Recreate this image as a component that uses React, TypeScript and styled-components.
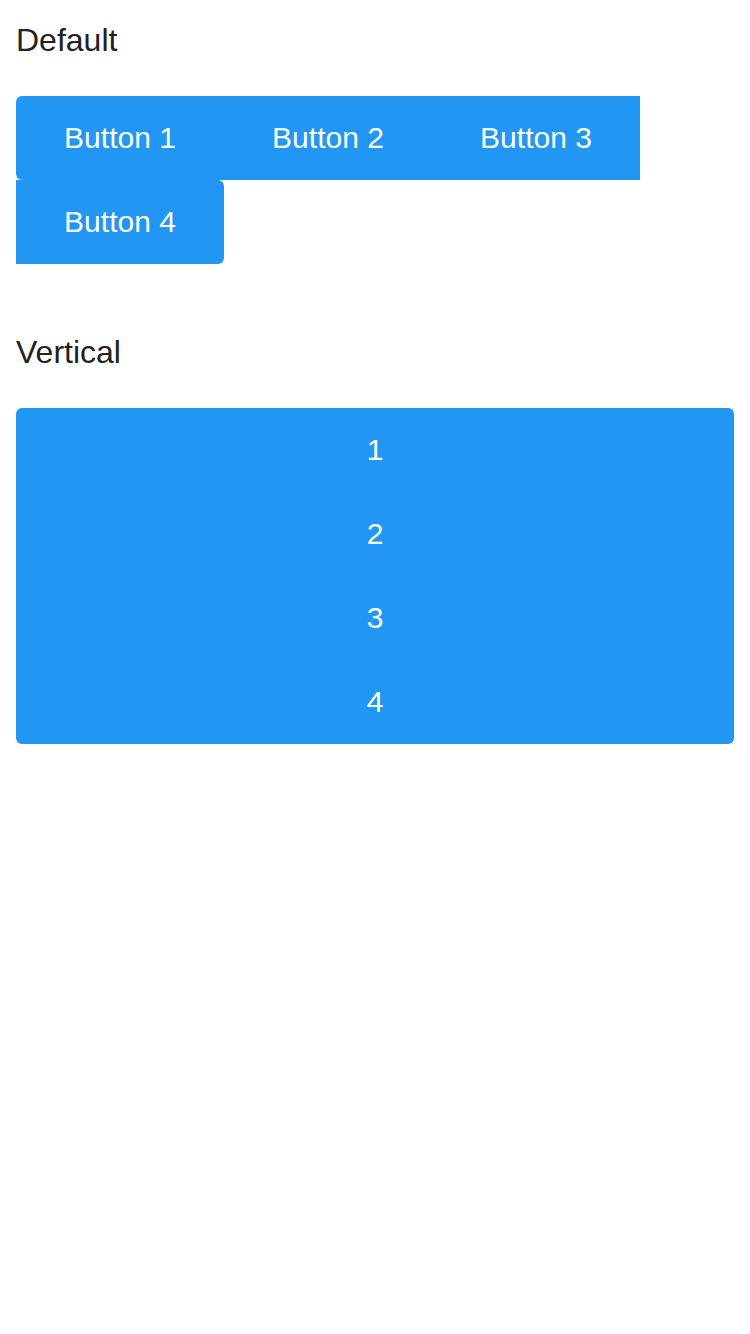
import React from "react";
import styled, { createGlobalStyle, css } from "styled-components";

const GlobalStyle = createGlobalStyle`
  html, body {
    margin: 0;
    padding: 0;
    background: #ffffff;
    font-family: "Liberation Sans", Arial, sans-serif;
  }
`;

const Page = styled.div`
  display: flex;
  flex-direction: column;
`;

const Section = styled.section`
  padding: 0 16px 48px;
`;

const Title = styled.h2`
  margin: 0;
  padding: 16px 0 32px;
  font-size: 32px;
  line-height: 48px;
  font-weight: 400;
  color: #212121;
`;

const Group = styled.div<{ $vertical?: boolean }>`
  display: flex;
  flex-wrap: wrap;
  ${(p) =>
    p.$vertical &&
    css`
      flex-direction: column;
      flex-wrap: nowrap;
    `}
`;

const GroupButton = styled.button<{ $vertical?: boolean }>`
  box-sizing: border-box;
  display: flex;
  align-items: center;
  justify-content: center;
  height: 84px;
  width: ${(p) => (p.$vertical ? "100%" : "208px")};
  margin: 0;
  padding: 0 16px;
  border: none;
  border-radius: 0;
  background: #2196f3;
  color: #ffffff;
  font-family: "Liberation Sans", Arial, sans-serif;
  font-size: 30px;
  cursor: pointer;

  ${(p) =>
    p.$vertical
      ? css`
          &:first-child {
            border-radius: 6px 6px 0 0;
          }
          &:last-child {
            border-radius: 0 0 6px 6px;
          }
        `
      : css`
          &:first-child {
            border-radius: 6px 0 0 6px;
          }
          &:last-child {
            border-radius: 0 6px 6px 0;
          }
        `}
`;

const defaultButtons = ["Button 1", "Button 2", "Button 3", "Button 4"];
const verticalButtons = ["1", "2", "3", "4"];

export default function App() {
  return (
    <Page>
      <GlobalStyle />
      <Section>
        <Title>Default</Title>
        <Group>
          {defaultButtons.map((label) => (
            <GroupButton key={label}>{label}</GroupButton>
          ))}
        </Group>
      </Section>
      <Section>
        <Title>Vertical</Title>
        <Group $vertical>
          {verticalButtons.map((label) => (
            <GroupButton key={label} $vertical>
              {label}
            </GroupButton>
          ))}
        </Group>
      </Section>
    </Page>
  );
}
